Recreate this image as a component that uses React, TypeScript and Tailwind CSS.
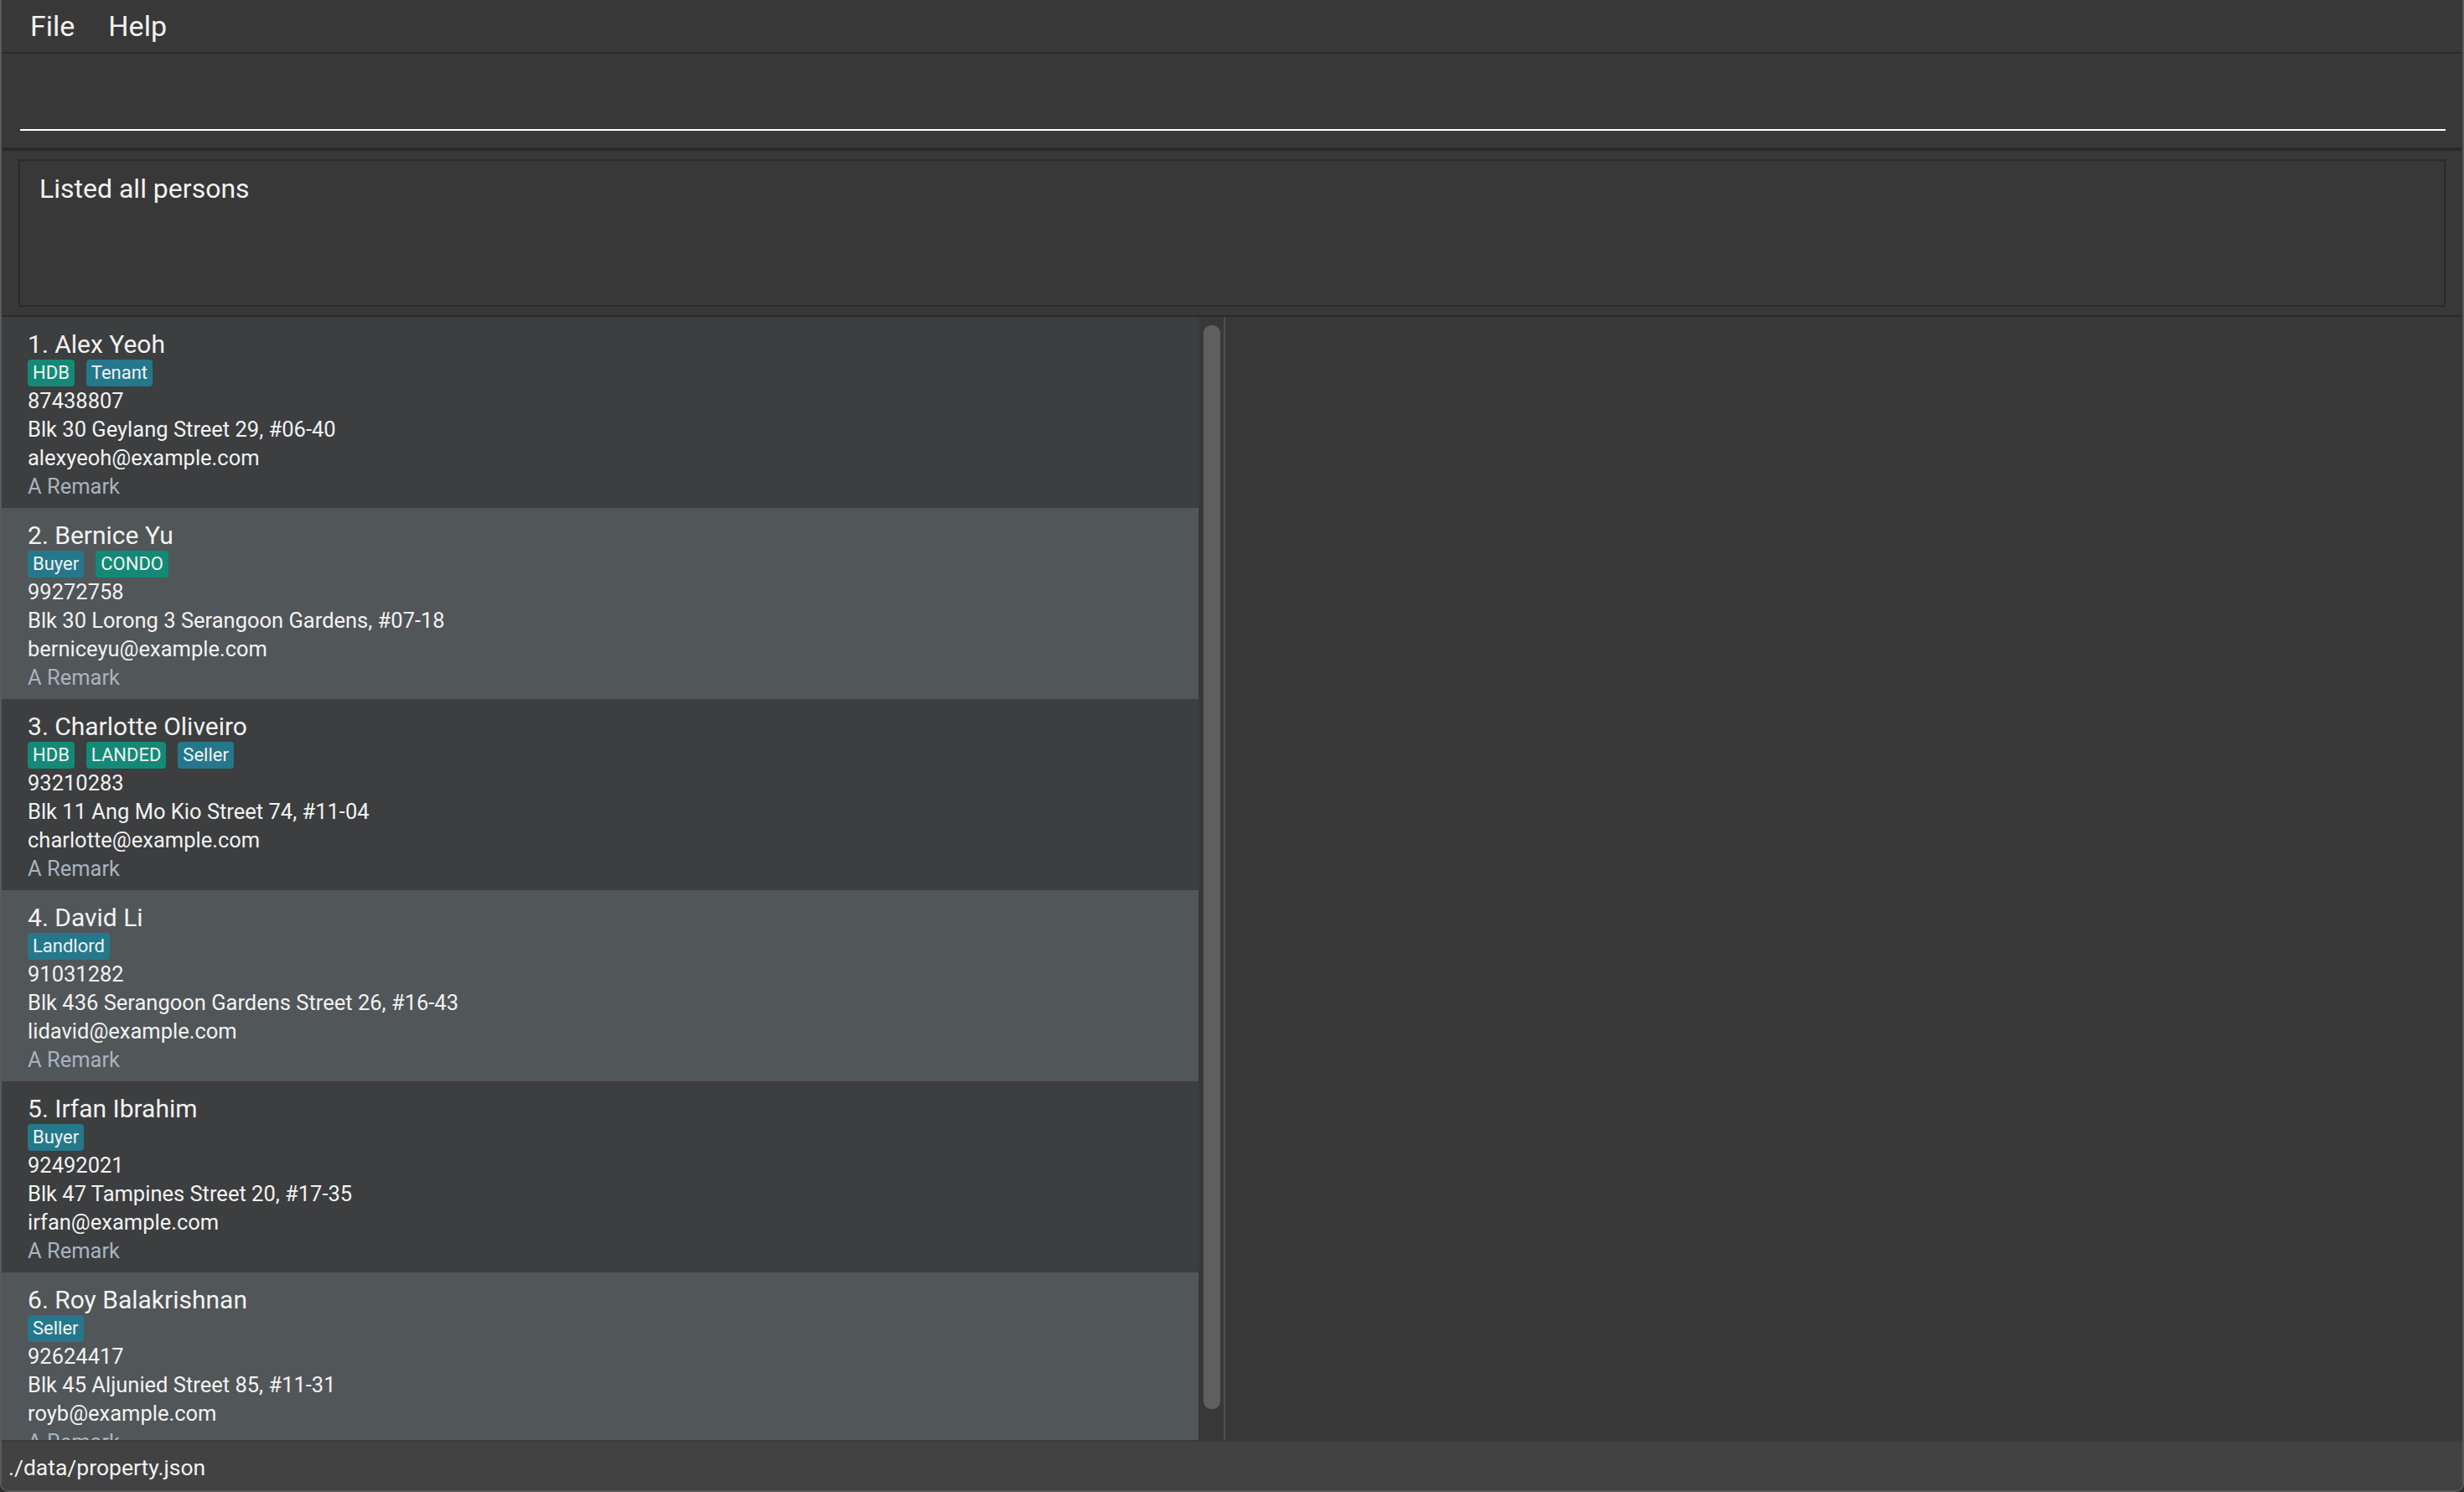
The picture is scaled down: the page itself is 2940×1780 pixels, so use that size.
import React from 'react';

type Tag = { label: string; kind: 'property' | 'role' };

interface Person {
  name: string;
  tags: Tag[];
  phone: string;
  address: string;
  email: string;
  remark: string;
}

const persons: Person[] = [
  {
    name: 'Alex Yeoh',
    tags: [
      { label: 'HDB', kind: 'property' },
      { label: 'Tenant', kind: 'role' },
    ],
    phone: '87438807',
    address: 'Blk 30 Geylang Street 29, #06-40',
    email: 'alexyeoh@example.com',
    remark: 'A Remark',
  },
  {
    name: 'Bernice Yu',
    tags: [
      { label: 'Buyer', kind: 'role' },
      { label: 'CONDO', kind: 'property' },
    ],
    phone: '99272758',
    address: 'Blk 30 Lorong 3 Serangoon Gardens, #07-18',
    email: 'berniceyu@example.com',
    remark: 'A Remark',
  },
  {
    name: 'Charlotte Oliveiro',
    tags: [
      { label: 'HDB', kind: 'property' },
      { label: 'LANDED', kind: 'property' },
      { label: 'Seller', kind: 'role' },
    ],
    phone: '93210283',
    address: 'Blk 11 Ang Mo Kio Street 74, #11-04',
    email: 'charlotte@example.com',
    remark: 'A Remark',
  },
  {
    name: 'David Li',
    tags: [{ label: 'Landlord', kind: 'role' }],
    phone: '91031282',
    address: 'Blk 436 Serangoon Gardens Street 26, #16-43',
    email: 'lidavid@example.com',
    remark: 'A Remark',
  },
  {
    name: 'Irfan Ibrahim',
    tags: [{ label: 'Buyer', kind: 'role' }],
    phone: '92492021',
    address: 'Blk 47 Tampines Street 20, #17-35',
    email: 'irfan@example.com',
    remark: 'A Remark',
  },
  {
    name: 'Roy Balakrishnan',
    tags: [{ label: 'Seller', kind: 'role' }],
    phone: '92624417',
    address: 'Blk 45 Aljunied Street 85, #11-31',
    email: 'royb@example.com',
    remark: 'A Remark',
  },
];

function PersonCard({ person, index }: { person: Person; index: number }) {
  const even = index % 2 === 1;
  return (
    <div
      className={`shrink-0 pl-[31px] pt-[15px] pb-[9px] ${even ? 'bg-[#515658]' : 'bg-[#3c3e3f]'}`}
    >
      <div className="text-[30px] leading-[36px] text-[#f2f2f2]">
        {index + 1}. {person.name}
      </div>
      <div className="flex h-[32px] gap-[14px]">
        {person.tags.map((tag) => (
          <span
            key={tag.label}
            className={`flex h-[32px] items-center rounded-[4px] px-[6px] text-[22px] leading-[32px] text-[#f2f2f2] ${
              tag.kind === 'property' ? 'bg-[#138a77]' : 'bg-[#25788b]'
            }`}
          >
            {tag.label}
          </span>
        ))}
      </div>
      <div className="text-[25.5px] leading-[34px] text-[#f2f2f2]">{person.phone}</div>
      <div className="text-[25.5px] leading-[34px] text-[#f2f2f2]">{person.address}</div>
      <div className="text-[25.5px] leading-[34px] text-[#f2f2f2]">{person.email}</div>
      <div className="text-[25.5px] leading-[34px] text-[#a8b3c0]">{person.remark}</div>
    </div>
  );
}

export default function App() {
  return (
    <div className="h-[1780px] w-[2940px] bg-[#2e2e2e]">
      <div className="flex h-full w-full flex-col overflow-hidden rounded-b-[10px] border-x-2 border-b-2 border-[#5a5a5a] bg-[#383838] font-['Roboto',sans-serif] text-[#f2f2f2]">
        {/* Menu bar */}
        <div className="flex h-[64px] shrink-0 items-center gap-[40px] border-b-2 border-[#2a2a2a] pl-[34px] text-[34px]">
          <span>File</span>
          <span>Help</span>
        </div>

        {/* Command box */}
        <div className="flex h-[112px] shrink-0 flex-col justify-end pb-[20px] pl-[22px] pr-[20px]">
          <input
            className="h-[60px] w-full border-b-2 border-white bg-transparent text-[30px] text-white outline-none"
            defaultValue=""
          />
        </div>

        <div className="h-[4px] shrink-0 bg-[#2a2a2a]" />

        {/* Result display */}
        <div className="h-[196px] shrink-0 px-[20px] py-[10px]">
          <div className="h-full border-2 border-[#2b2b2b] pl-[23px] pt-[13px] text-[32px] leading-[40px]">
            Listed all persons
          </div>
        </div>

        <div className="h-[2px] shrink-0 bg-[#2a2a2a]" />

        {/* Main content */}
        <div className="flex min-h-0 flex-1">
          <div className="flex w-[1428px] flex-col overflow-hidden">
            {persons.map((p, i) => (
              <PersonCard key={p.name} person={p} index={i} />
            ))}
          </div>
          <div className="w-[30px] shrink-0 pl-[6px] pt-[10px]">
            <div className="h-[1293px] w-[20px] rounded-[9px] bg-[#5f5f5f]" />
          </div>
          <div className="w-[2px] shrink-0 bg-[#4e4e4e]" />
          <div className="flex-1 bg-[#383838]" />
        </div>

        {/* Status bar */}
        <div className="flex h-[60px] shrink-0 items-center border-t-2 border-[#3b3b3b] bg-[#424242] pl-[8px] pt-[4px] text-[26.5px]">
          ./data/property.json
        </div>
      </div>
    </div>
  );
}
